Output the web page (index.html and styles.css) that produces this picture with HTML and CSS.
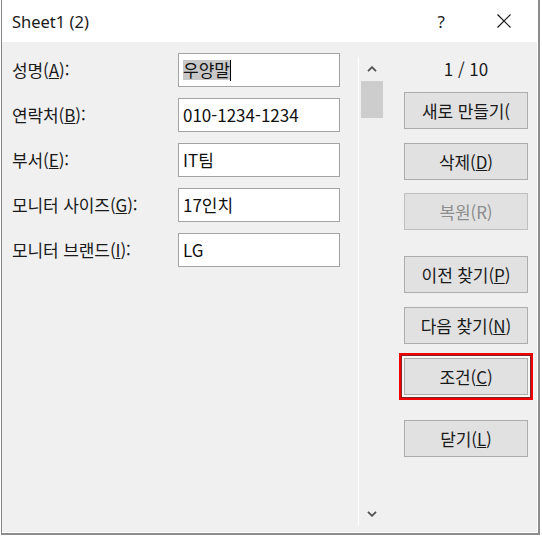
FILE: index.html
```html
<!DOCTYPE html>
<html lang="ko">
<head>
<meta charset="utf-8">
<title>Sheet1 (2)</title>
<link rel="stylesheet" href="styles.css">
</head>
<body>
<div class="dialog">
  <div class="titlebar">
    <span class="title">Sheet1 (2)</span>
    <span class="help">?</span>
    <span class="close">
      <svg width="16" height="16" viewBox="0 0 16 16"><path d="M1.5 1.5 L14.5 14.5 M14.5 1.5 L1.5 14.5" stroke="#1a1a1a" stroke-width="1.2" fill="none"/></svg>
    </span>
  </div>
  <div class="content">
    <div class="form">
      <div class="row">
        <label class="label">성명(<u>A</u>):</label>
        <div class="field"><span class="sel">우양말</span><span class="caret"></span></div>
      </div>
      <div class="row">
        <label class="label">연락처(<u>B</u>):</label>
        <div class="field">010-1234-1234</div>
      </div>
      <div class="row">
        <label class="label">부서(<u>E</u>):</label>
        <div class="field">IT팀</div>
      </div>
      <div class="row">
        <label class="label">모니터 사이즈(<u>G</u>):</label>
        <div class="field">17인치</div>
      </div>
      <div class="row">
        <label class="label">모니터 브랜드(<u>I</u>):</label>
        <div class="field">LG</div>
      </div>
    </div>
    <div class="scrollbar">
      <div class="arrow arrow-up">
        <svg width="10" height="6" viewBox="0 0 10 6"><path d="M1 5.2 L5 1.2 L9 5.2" stroke="#505050" stroke-width="1.8" fill="none"/></svg>
      </div>
      <div class="thumb"></div>
      <div class="track"></div>
      <div class="arrow arrow-down">
        <svg width="10" height="6" viewBox="0 0 10 6"><path d="M1 0.8 L5 4.8 L9 0.8" stroke="#505050" stroke-width="1.8" fill="none"/></svg>
      </div>
    </div>
    <div class="actions">
      <div class="counter">1 / 10</div>
      <button class="btn">새로 만들기(</button>
      <button class="btn gap-s">삭제(<u>D</u>)</button>
      <button class="btn gap-s2 disabled">복원(R)</button>
      <button class="btn gap-l">이전 찾기(<u>P</u>)</button>
      <button class="btn gap-s">다음 찾기(<u>N</u>)</button>
      <button class="btn gap-s highlight">조건(<u>C</u>)</button>
      <button class="btn gap-l2">닫기(<u>L</u>)</button>
    </div>
  </div>
</div>
</body>
</html>
```

FILE: styles.css
```css
html, body {
  margin: 0;
  padding: 0;
  background: #ffffff;
}

body {
  font-family: "Noto Sans CJK KR", "Noto Sans", sans-serif;
  color: #1a1a1a;
}

.dialog {
  margin-left: 1px;
  width: 536px;
  height: 533px;
  border-left: 1px solid #858585;
  border-right: 2px solid #8c8c8c;
  border-bottom: 2px solid #8c8c8c;
  display: flex;
  flex-direction: column;
  background: #ffffff;
}

.titlebar {
  height: 42px;
  flex: none;
  display: flex;
  align-items: center;
  background: #ffffff;
}

.title {
  font-family: "Noto Sans", "Noto Sans CJK KR", sans-serif;
  font-size: 16.5px;
  margin-left: 10px;
  margin-top: 1px;
  color: #1a1a1a;
}

.help {
  font-family: "Noto Sans", sans-serif;
  font-size: 17px;
  margin-left: auto;
  margin-right: 51px;
  color: #1a1a1a;
}

.close {
  display: flex;
  margin-right: 26px;
}

.content {
  flex: 1;
  display: flex;
  background: #f0f0f0;
  border-right: 1px solid #ffffff;
  border-bottom: 1px solid #ffffff;
}

.form {
  width: 346px;
  padding: 11px 0 0 10px;
  display: flex;
  flex-direction: column;
  gap: 11px;
}

.row {
  display: flex;
  align-items: center;
  height: 34px;
}

.label {
  width: 166px;
  font-size: 17px;
  line-height: 20px;
  color: #1a1a1a;
  white-space: nowrap;
  letter-spacing: -0.1px;
}

.field {
  box-sizing: border-box;
  width: 162px;
  height: 34px;
  border: 1px solid #a3a3a3;
  background: #ffffff;
  padding: 0 4px;
  display: flex;
  align-items: center;
  font-size: 17px;
  line-height: 20px;
  color: #111111;
}

.sel {
  background: #c8c8c8;
  line-height: 20px;
}

.caret {
  width: 1px;
  height: 21px;
  background: #000000;
}

.scrollbar {
  width: 25px;
  margin-top: 15px;
  margin-bottom: 6px;
  border-left: 1px solid #ffffff;
  display: flex;
  flex-direction: column;
  align-items: center;
}

.arrow {
  height: 24px;
  display: flex;
  align-items: center;
  justify-content: center;
  width: 100%;
}

.thumb {
  width: 22px;
  height: 37px;
  background: #cdcdcd;
  margin-left: 1px;
}

.track {
  flex: 1;
}

.arrow-down {
  height: 20px;
  margin-bottom: 2px;
}

.actions {
  width: 124px;
  margin-left: 20px;
  display: flex;
  flex-direction: column;
}

.counter {
  margin-top: 16px;
  height: 22px;
  line-height: 22px;
  text-align: center;
  font-size: 17px;
  color: #1a1a1a;
  margin-bottom: 12px;
}

.btn {
  box-sizing: border-box;
  width: 124px;
  height: 37px;
  border: 1px solid #adadad;
  background: #e1e1e1;
  font-family: "Noto Sans CJK KR", "Noto Sans", sans-serif;
  font-size: 17px;
  line-height: 20px;
  color: #1a1a1a;
  padding: 0;
  white-space: nowrap;
  overflow: hidden;
  letter-spacing: -0.1px;
}

.gap-s {
  margin-top: 14px;
}

.gap-s2 {
  margin-top: 13px;
}

.gap-l {
  margin-top: 26px;
}

.gap-l2 {
  margin-top: 25px;
}

.disabled {
  color: #8d8d8d;
  border-color: #bfbfbf;
}

.highlight {
  box-shadow: 0 0 0 2px #f8f8f8, 0 0 0 2.6px #3a3a3a, 0 0 0 5px #f00000;
}
```
